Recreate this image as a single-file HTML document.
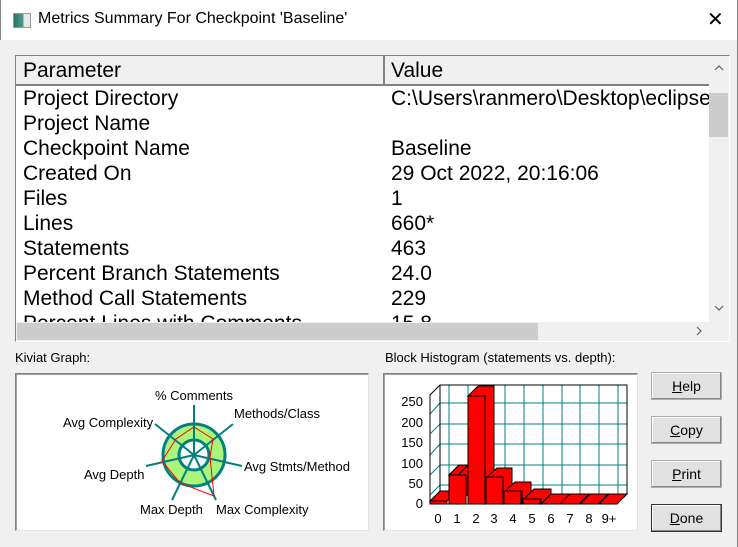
<!DOCTYPE html>
<html><head><style>
body{margin:0;width:738px;height:547px;background:#f0f0f0;font-family:"Liberation Sans",Arial,sans-serif;position:relative;overflow:hidden}
.abs{position:absolute}
.title{left:0;top:0;width:736px;height:40px;background:#fff;border-left:1px solid #888;border-right:1px solid #888}
.tbl{left:15px;top:55px;width:713px;height:285px;border:1px solid #828282;border-right-color:#fff;border-bottom-color:#fff;background:#fff;overflow:hidden}
.row{position:absolute;left:7px;font-size:21px;color:#000;white-space:nowrap}
.btn{position:absolute;left:651px;width:69px;height:26px;background:#e1e1e1;border:1px solid #adadad;font-size:14px;text-align:center;line-height:26px;box-shadow:inset -1px -1px #888,inset 1px 1px #fff}
.box{position:absolute;background:#fff;border:1px solid #828282;border-right-color:#e3e3e3;border-bottom-color:#e3e3e3;box-shadow:inset 1px 1px #a0a0a0}
</style></head><body>
<div class="abs title">
 <div class="abs" style="left:12px;top:13px;width:16px;height:13px;border:1px solid #999;background:linear-gradient(90deg,#2f6f6a,#4fa08f 60%,#e8e8e8 60%)"></div>
 <div class="abs" style="left:37px;top:10px;font-size:16px">Metrics Summary For Checkpoint 'Baseline'</div>
 <div class="abs" style="left:706px;top:7px;font-size:20px">✕</div>
</div>
<div class="abs" style="left:737px;top:0;width:1px;height:547px;background:#888"></div>
<div class="abs tbl">
 <div class="abs" style="left:0;top:0;width:693px;height:28px;background:#f0f0f0;border-bottom:2px solid #828282"></div>
 <div class="abs" style="left:367px;top:0;width:2px;height:28px;background:#828282"></div>
 <div class="row" style="top:3px">Parameter</div>
 <div class="row" style="top:3px;left:375px">Value</div>
 <div class="row" style="top:31px">Project Directory</div><div class="row" style="top:31px;left:375px">C:\Users\ranmero\Desktop\eclipse</div>
 <div class="row" style="top:56px">Project Name</div>
 <div class="row" style="top:81px">Checkpoint Name</div><div class="row" style="top:81px;left:375px">Baseline</div>
 <div class="row" style="top:106px">Created On</div><div class="row" style="top:106px;left:375px">29 Oct 2022, 20:16:06</div>
 <div class="row" style="top:131px">Files</div><div class="row" style="top:131px;left:375px">1</div>
 <div class="row" style="top:156px">Lines</div><div class="row" style="top:156px;left:375px">660*</div>
 <div class="row" style="top:181px">Statements</div><div class="row" style="top:181px;left:375px">463</div>
 <div class="row" style="top:206px">Percent Branch Statements</div><div class="row" style="top:206px;left:375px">24.0</div>
 <div class="row" style="top:231px">Method Call Statements</div><div class="row" style="top:231px;left:375px">229</div>
 <div class="row" style="top:256px;height:10px;overflow:hidden">Percent Lines with Comments</div><div class="row" style="top:256px;left:375px;height:10px;overflow:hidden">15.8</div>
 <div class="abs" style="left:693px;top:0;width:20px;height:266px;background:#f0f0f0"></div>
 <div class="abs" style="left:693px;top:37px;width:19px;height:44px;background:#cdcdcd"></div>
 <svg class="abs" style="left:693px;top:0" width="20" height="266" fill="none" stroke="#606060" stroke-width="1.2"><polyline points="6,14 10,10 14,14"/><polyline points="6,250 10,254 14,250"/></svg>
 <div class="abs" style="left:0;top:266px;width:713px;height:19px;background:#f0f0f0"></div>
 <div class="abs" style="left:1px;top:267px;width:521px;height:17px;background:#cdcdcd"></div>
 <svg class="abs" style="left:673px;top:266px" width="20" height="19" fill="none" stroke="#606060" stroke-width="1.2"><polyline points="8,5 12,9 8,13"/></svg>
</div>
<div class="abs" style="left:15px;top:350px;font-size:13px">Kiviat Graph:</div>
<div class="abs" style="left:385px;top:350px;font-size:13px">Block Histogram (statements vs. depth):</div>
<div class="box" style="left:15px;top:373px;width:352px;height:156px"></div>
<div class="box" style="left:383px;top:373px;width:253px;height:156px"></div>
<svg class="abs" style="left:0;top:0" width="738" height="547" font-family="Liberation Sans,Arial,sans-serif" font-size="13">
 <circle cx="194" cy="455" r="31" fill="#aaf57a" stroke="#008080" stroke-width="3"/>
 <circle cx="194" cy="455" r="15" fill="#fff" stroke="#008080" stroke-width="3"/>
 <g stroke="#008080" stroke-width="2">
  <line x1="194" y1="455" x2="194" y2="405"/>
  <line x1="194" y1="455" x2="233" y2="424"/>
  <line x1="194" y1="455" x2="242" y2="466"/>
  <line x1="194" y1="455" x2="216" y2="500"/>
  <line x1="194" y1="455" x2="172" y2="500"/>
  <line x1="194" y1="455" x2="146" y2="466"/>
  <line x1="194" y1="455" x2="155" y2="424"/>
 </g>
 <polygon points="194,427 213,439 210,457 214,496 180,483 162,461 176,439" fill="none" stroke="#f00" stroke-width="1"/>
 <text x="155" y="400">% Comments</text>
 <text x="234" y="418">Methods/Class</text>
 <text x="244" y="471">Avg Stmts/Method</text>
 <text x="216" y="514">Max Complexity</text>
 <text x="140" y="514">Max Depth</text>
 <text x="84" y="479">Avg Depth</text>
 <text x="63" y="427">Avg Complexity</text>
 <g stroke="#008080" stroke-width="1">
  <line x1="440" y1="385" x2="627" y2="385"/><line x1="440" y1="403" x2="627" y2="403"/><line x1="440" y1="424" x2="627" y2="424"/><line x1="440" y1="444" x2="627" y2="444"/><line x1="440" y1="465" x2="627" y2="465"/><line x1="440" y1="485" x2="627" y2="485"/>
  <line x1="449" y1="385" x2="449" y2="494"/><line x1="468" y1="385" x2="468" y2="494"/><line x1="487" y1="385" x2="487" y2="494"/><line x1="505" y1="385" x2="505" y2="494"/><line x1="524" y1="385" x2="524" y2="494"/><line x1="543" y1="385" x2="543" y2="494"/><line x1="562" y1="385" x2="562" y2="494"/><line x1="580" y1="385" x2="580" y2="494"/><line x1="599" y1="385" x2="599" y2="494"/><line x1="618" y1="385" x2="618" y2="494"/>
  <line x1="430" y1="414" x2="440" y2="403"/><line x1="430" y1="434" x2="440" y2="424"/><line x1="430" y1="455" x2="440" y2="444"/><line x1="430" y1="475" x2="440" y2="465"/><line x1="430" y1="495" x2="440" y2="485"/>
 </g>
 <g fill="none" stroke="#000"><polyline points="430,504 430,395 440,385 627,385 627,494 617,504 430,504"/><line x1="440" y1="385" x2="440" y2="494"/><line x1="430" y1="504" x2="440" y2="494"/><line x1="440" y1="494" x2="627" y2="494"/></g>
 <g fill="#f00" stroke="#000" stroke-width="1">
  <polygon points="430,501 440,491 457,491 447,501"/><rect x="430" y="501" width="17" height="3"/>
  <polygon points="449,475 459,465 468,465 468,494 458,504 458,475"/><polygon points="449,475 459,465 468,465 458,475"/><rect x="449" y="475" width="17" height="29"/>
  <polygon points="468,396 478,386 494,386 494,494 485,504 485,396"/><rect x="468" y="396" width="17" height="108"/>
  <polygon points="487,477 497,468 512,468 512,494 503,504 503,477"/><rect x="486" y="477" width="17" height="27"/>
  <polygon points="505,491 515,482 531,482 531,494 522,504 522,491"/><rect x="504" y="491" width="17" height="13"/>
  <polygon points="524,499 534,489 551,489 551,494 541,504 541,499"/><rect x="523" y="499" width="17" height="5"/>
  <polygon points="541,504 551,494 570,494 560,504"/><polygon points="560,504 570,494 589,494 579,504"/><polygon points="580,504 590,494 608,494 598,504"/><polygon points="599,504 609,494 627,494 617,504"/>
 </g>
 <g font-size="13" text-anchor="end"><text x="423" y="406">250</text><text x="423" y="427">200</text><text x="423" y="447">150</text><text x="423" y="468">100</text><text x="423" y="488">50</text><text x="423" y="508">0</text></g>
 <g font-size="13" text-anchor="middle"><text x="438" y="523">0</text><text x="457" y="523">1</text><text x="476" y="523">2</text><text x="494" y="523">3</text><text x="513" y="523">4</text><text x="532" y="523">5</text><text x="551" y="523">6</text><text x="570" y="523">7</text><text x="589" y="523">8</text><text x="609" y="523">9+</text></g>
</svg>
<div class="btn" style="top:372px"><u>H</u>elp</div>
<div class="btn" style="top:416px"><u>C</u>opy</div>
<div class="btn" style="top:460px"><u>P</u>rint</div>
<div class="btn" style="top:504px;border:1px solid #333"><u>D</u>one</div>
</body></html>
